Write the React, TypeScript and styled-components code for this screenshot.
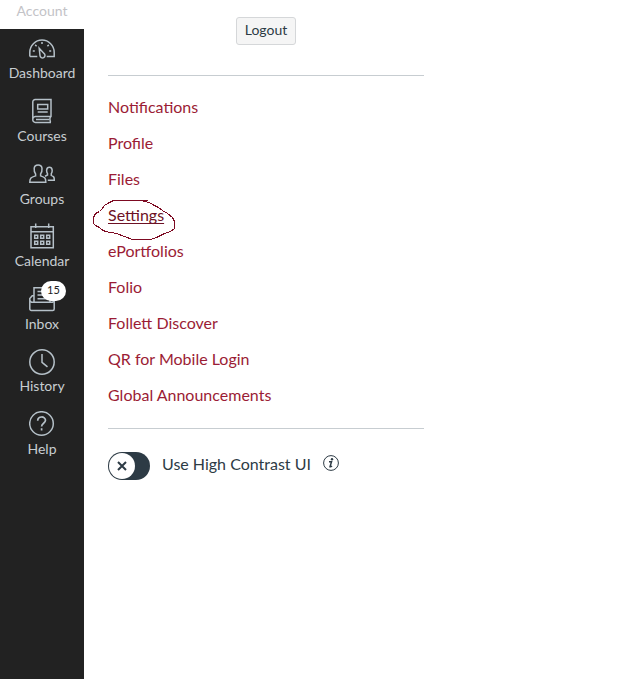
import React from "react";
import styled, { createGlobalStyle } from "styled-components";

const Global = createGlobalStyle`
  * { box-sizing: border-box; }
  body { margin: 0; background: #fff; font-family: Lato, sans-serif; color: #2d3b45; overflow: hidden; }
`;

const Page = styled.div`
  display: flex;
  height: 679px;
`;

const Sidebar = styled.nav`
  width: 84px;
  flex: none;
  display: flex;
  flex-direction: column;
  background: #222;
`;

const Account = styled.div`
  height: 29px;
  background: #fff;
  color: #c3c3c7;
  font-size: 14px;
  line-height: 22px;
  text-align: center;
`;

const NavItem = styled.div`
  height: 62.6px;
  padding-top: 6.6px;
  display: flex;
  flex-direction: column;
  align-items: center;
  color: #c7cdd1;
  font-size: 14px;
  line-height: 20px;
`;

const IconBox = styled.div`
  position: relative;
  height: 27.75px;

  svg {
    display: block;
    fill: none;
    stroke: #b5c0c8;
    stroke-width: 1.5;
  }
`;

const Badge = styled.span`
  position: absolute;
  left: 12px;
  top: -5px;
  width: 25px;
  height: 20px;
  border-radius: 10px;
  background: #fff;
  color: #222;
  font-size: 11px;
  line-height: 18px;
  text-align: center;
`;

const Tray = styled.main`
  width: 316px;
  margin-left: 24px;
  display: flex;
  flex-direction: column;
  font-size: 16px;
`;

const Header = styled.header`
  height: 76px;
  border-bottom: 1px solid #c7cdd1;
  padding-top: 17px;
  text-align: center;
`;

const Logout = styled.button`
  display: block;
  margin: 0 auto;
  width: 60px;
  height: 28px;
  padding: 0 0 2px;
  border: 1px solid #d5d7d9;
  border-radius: 3px;
  background: #f5f5f5;
  color: #2d3b45;
  font: 14px/24px Lato, sans-serif;
`;

const Links = styled.ul`
  list-style: none;
  margin: 0;
  padding: 13px 0 15px;
  border-bottom: 1px solid #c7cdd1;
`;

const LinkItem = styled.li`
  position: relative;
  height: 36px;
  line-height: 36px;
`;

const Link = styled.a<{ $active?: boolean }>`
  color: ${(p) => (p.$active ? "#6d1125" : "#9b1c35")};
  text-decoration: ${(p) => (p.$active ? "underline" : "none")};
  text-decoration-thickness: 1px;
  text-decoration-skip-ink: none;
  text-underline-offset: 2px;
`;

const Scribble = styled.svg`
  position: absolute;
  left: -18px;
  top: -2px;
  fill: none;
  stroke: #7d0a22;
`;

const Contrast = styled.div`
  display: flex;
  align-items: center;
  height: 28px;
  margin-top: 23px;
`;

const Switch = styled.span`
  width: 42px;
  height: 28px;
  padding: 1px;
  border-radius: 14px;
  background: #2d3b45;
`;

const Knob = styled.span`
  display: flex;
  align-items: center;
  justify-content: center;
  width: 26px;
  height: 26px;
  border-radius: 50%;
  background: #fff;
`;

const ContrastLabel = styled.span`
  margin: -6px 12px 0;
`;

const InfoIcon = styled.svg`
  margin-top: -6px;
`;

const Svg = ({ children }: { children: React.ReactNode }) => (
  <svg width="26" height="26" viewBox="0 0 26 26">{children}</svg>
);

const icons = {
  Dashboard: (
    <Svg>
      <path d="M.8 20.500V16.300a12.200 12.200 0 0 1 24.400 0v4.200h-7.500M.8 20.500h7.500" />
      <path d="M10.200 12.200l4.800 5.200a2.500 2.500 0 1 1-4 2.200z" />
      <path d="M13 6v2M6.200 8.900l1.400 1.300M19.800 8.900l-1.400 1.300M3.800 14.900h2M22.200 14.900h-2" />
    </Svg>
  ),
  Courses: (
    <Svg>
      <path d="M22 18.4V1.500H6.2A2.400 2.400 0 0 0 3.800 3.900v17.800a2.500 2.500 0 0 0 2.500 2.700H22M22.700 18.400H6.200a2.800 2.800 0 0 0-2.400 2.500M21.500 18.400c-1 2-1 4 0 6M7 21.400h13" />
      <path d="M8.700 6.500h10v4.500h-10zM8.700 14h10" />
    </Svg>
  ),
  Groups: (
    <Svg>
      <path d="M.8 21.300c0-4.500 1-5 5.800-6.400v-2C5.300 11.500 5 9.800 5.200 7.400 5.400 5.100 7 4 9.100 4s3.700 1.100 3.900 3.400c.2 2.400-.2 4.100-1.400 5.500v2c4.500 1.400 5.200 1.900 5.200 6.400z" />
      <path d="M16 15.200l2.500-1.200v-1.400c-1.200-1.800-1.600-6.300 1.900-6.300s3.100 4.500 1.900 6.300V14.400c2.500 1 3 1.600 3 4.900h-6.500" />
    </Svg>
  ),
  Calendar: (
    <Svg>
      <path d="M2 3.700h22.300v21H2zM2 8.800h22.300M6.700.4v4.500M19.700.4v4.500" />
      <path d="M5.700 12.300h3v3h-3zM11.700 12.300h3v3h-3zM17.700 12.300h3v3h-3zM5.700 18.300h3v3h-3zM11.700 18.300h3v3h-3zM17.700 18.300h3v3h-3z" />
    </Svg>
  ),
  Inbox: (
    <Svg>
      <path d="M5 15.500V1.800h16v13.700M5 9.800H3.200L.8 12.500v10.500A1.500 1.500 0 0 0 2.300 24.500h21.400a1.500 1.500 0 0 0 1.500-1.500V12.500l-1.700-2.700H21M.8 14.500l1.700 1.700h21l1.700-1.700" />
      <path d="M8.500 5.500h8M8.500 9h9M8.500 12.700h9" />
    </Svg>
  ),
  History: (
    <Svg><circle cx="13" cy="13" r="12.200" /><path d="M13 5v8.400l5.500 4.500" /></Svg>
  ),
  Help: (
    <Svg>
      <circle cx="12.500" cy="12.500" r="11.800" />
      <path strokeWidth="1.700" d="M8.700 9.700c0-5 7.800-4.800 7.800-.4 0 3-3.900 3-3.900 6.200M12.600 17.300v2.100" />
    </Svg>
  ),
};

const names = ["Dashboard", "Courses", "Groups", "Calendar", "Inbox", "History", "Help"] as const;
const links = ["Notifications", "Profile", "Files", "Settings", "ePortfolios", "Folio", "Follett Discover", "QR for Mobile Login", "Global Announcements"];

export default function App() {
  return (
    <Page>
      <Global />
      <Sidebar>
        <Account>Account</Account>
        {names.map((name) => (
          <NavItem key={name}>
            <IconBox>
              {icons[name]}
              {name === "Inbox" && <Badge>15</Badge>}
            </IconBox>
            {name}
          </NavItem>
        ))}
      </Sidebar>
      <Tray>
        <Header><Logout>Logout</Logout></Header>
        <Links>
          {links.map((label) => (
            <LinkItem key={label}>
              <Link $active={label === "Settings"}>{label}</Link>
              {label === "Settings" && (
                <Scribble width="90" height="48" shapeRendering="crispEdges">
                  <path d="M57.500 5.500H23.500L19.500 7.500L14.500 10.500L11.500 14.500L9.500 16.500L5.500 18.500L3.500 22.500V28.500L5.500 30.500L9.500 32.500L11.500 34.500L15.500 36.500L26.500 38.500L34.500 41.500L42.500 44.500H60.500L66.500 42.500L70.500 40.500L74.500 38.500L80.500 36.500L84.500 33.500V26.500L82.500 22.500L77.500 18.500L72.500 15.500L68.500 12.500L62.500 9.500L59.500 7.500L53.500 6.500" />
                </Scribble>
              )}
            </LinkItem>
          ))}
        </Links>
        <Contrast>
          <Switch>
            <Knob>
              <svg width="10" height="10" viewBox="0 0 10 10"><path d="M1 1l8 8M9 1l-8 8" stroke="#2d3b45" strokeWidth="2" /></svg>
            </Knob>
          </Switch>
          <ContrastLabel>Use High Contrast UI</ContrastLabel>
          <InfoIcon width="16" height="16" viewBox="0 0 16 16">
            <circle cx="8" cy="8" r="7.400" fill="none" stroke="#2d3b45" />
            <circle cx="9" cy="4.200" r="1.200" fill="#2d3b45" />
            <path d="M6 6.800h2.500L7 11.800q.8.300 2-.8" fill="none" stroke="#2d3b45" strokeWidth="1.500" />
          </InfoIcon>
        </Contrast>
      </Tray>
    </Page>
  );
}
